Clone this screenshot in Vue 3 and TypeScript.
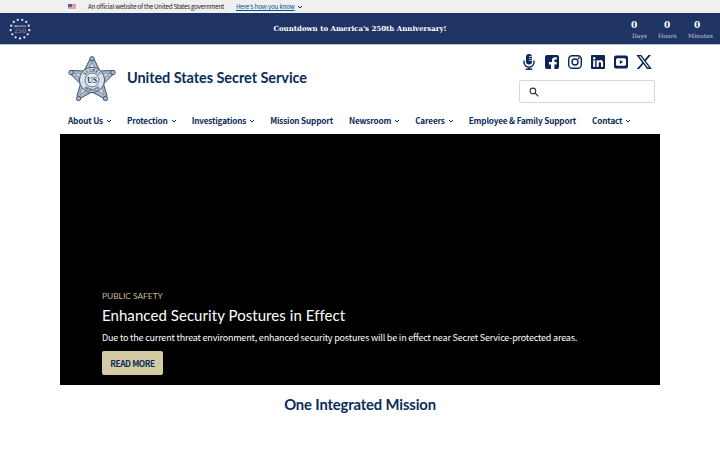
<template>
  <div class="page">
    <div class="gov-banner">
      <svg class="flag" viewBox="0 0 16 11">
        <rect width="16" height="11" fill="#f4e6e4" />
        <path d="M0 .8h16M0 3.2h16M0 5.6h16M0 8h16M0 10.3h16" stroke="#d5544d" stroke-width="1.2" />
        <rect width="8" height="6.2" fill="#3f57a0" />
        <path d="M1 1.5h6M1 3.2h6M1 4.8h6" stroke="#a3afd4" stroke-width=".6" stroke-dasharray=".8 .8" />
      </svg>
      <span class="gov-text">An official website of the United States government</span>
      <a class="gov-link">Here's how you know</a>
      <svg class="chevron" viewBox="0 0 8 6"><path d="M2 2 4 4l2-2" /></svg>
    </div>

    <div class="countdown">
      <svg class="seal" viewBox="0 0 22 22">
        <circle v-for="(dot, i) in sealDots" :key="i" :cx="dot.x" :cy="dot.y" r="1.15" fill="#e3e8f3" />
        <text x="11" y="8.6" class="seal-small" textLength="12">America</text>
        <text x="11" y="14.7" class="seal-big" textLength="12">250</text>
      </svg>
      <strong class="countdown-title">Countdown to America's 250th Anniversary!</strong>
      <div class="timer">
        <div v-for="unit in units" :key="unit" class="unit" :class="unit.toLowerCase()">
          <b>0</b>
          <span>{{ unit }}</span>
        </div>
      </div>
    </div>

    <header class="header">
      <div class="brand">
        <svg class="star" viewBox="0 0 48 46">
          <g fill="#a9b6c6" stroke="#3c5474" stroke-width="1">
            <path d="M22 3h4l6 12 12-.5 1 4L35.500 28 39 40l-3 2.500L24 36l-12 6.500L9 40l3.500-12L3 18.500l1-4 12 .5Z" />
            <circle cx="24" cy="2.800" r="2.200" />
            <circle cx="45" cy="16.500" r="2.200" />
            <circle cx="37.500" cy="42.500" r="2.200" />
            <circle cx="10.500" cy="42.500" r="2.200" />
            <circle cx="3" cy="16.500" r="2.200" />
          </g>
          <path d="m24 6 3 7h-6zM42 17l-6 5-1-4zM36 39l-6-5 4-2zM12 39l2-7 4 2zM6 17l7 1-1 4z" fill="#dde3ea" stroke="#647991" stroke-width=".6" />
          <circle cx="24" cy="24" r="12.600" fill="#dbe1e8" stroke="#405875" />
          <path id="badge-top" d="M15.800 24a8.200 8.200 0 0 1 16.400 0" fill="none" />
          <path id="badge-bottom" d="M12.600 24a11.400 11.400 0 0 0 22.800 0" fill="none" />
          <text class="badge-text"><textPath href="#badge-top" startOffset="50%">SECRET</textPath></text>
          <text class="badge-text"><textPath href="#badge-bottom" startOffset="50%">SERVICE</textPath></text>
          <circle cx="24" cy="24" r="7" fill="#e7ebf0" stroke="#405875" stroke-width=".8" />
          <text x="24" y="26.900" class="badge-us">US</text>
        </svg>
        <span class="brand-name">United States Secret Service</span>
      </div>
      <div class="tools">
        <div class="social">
          <svg viewBox="0 0 16 16">
            <rect x="5" y="0" width="6" height="10.500" rx="3" />
            <path d="M7.800 2.500H11M7.800 4.500H11M7.800 6.500H11" stroke="#fff" stroke-width=".7" />
            <path d="M3 6.500v1.700a5 5 0 0 0 10 0V6.500M8 13.200v2M4.700 15.300h6.600" class="line" />
          </svg>
          <svg viewBox="0 0 16 16">
            <path d="M3 1h10a2 2 0 0 1 2 2v10a2 2 0 0 1-2 2h-2.600v-4.600h2l.4-2.400h-2.400V6.700c0-.8.5-1.200 1.300-1.200h1.200V3.400c-.5-.1-1.100-.2-1.800-.2-2 0-3.100 1.200-3.100 3.100V8H5v2.400h2V15H3a2 2 0 0 1-2-2V3a2 2 0 0 1 2-2Z" />
          </svg>
          <svg viewBox="0 0 16 16">
            <rect x="1.700" y="1.700" width="12.600" height="12.600" rx="3.500" class="line" />
            <circle cx="8" cy="8" r="3" class="line" />
            <circle cx="11.800" cy="4.200" r=".95" />
          </svg>
          <svg viewBox="0 0 16 16">
            <path d="M2 1h12a1 1 0 0 1 1 1v12a1 1 0 0 1-1 1H2a1 1 0 0 1-1-1V2a1 1 0 0 1 1-1Z" />
            <path d="M3.200 6.300h2V13h-2zM6.600 6.300h2v.9c.4-.7 1.100-1.100 2-1.100 2 0 2.500 1.300 2.500 3.100V13h-2.100V9.600c0-.9-.1-1.700-1.100-1.700s-1.200.8-1.200 1.700V13H6.600z" fill="#fff" />
            <circle cx="4.200" cy="4.200" r="1.200" fill="#fff" />
          </svg>
          <svg viewBox="0 0 16 16">
            <rect x="1" y="1.500" width="14" height="13" rx="2" />
            <rect x="3" y="4.300" width="10" height="7.400" rx="1.500" fill="#fff" />
            <path d="m6.800 6 3.300 2-3.300 2z" />
          </svg>
          <svg viewBox="0 0 512 512">
            <path d="M403 32h76L313 221.600 508 480H355L235 323 98 480H22l178-203L13 32h157l108.300 143.600zM376.500 434.500h42L146 75.300h-45z" />
          </svg>
        </div>
        <div class="search">
          <svg viewBox="0 0 10 10"><circle cx="3.900" cy="3.900" r="2.800" /><path d="m6 6 3.300 3.300" /></svg>
        </div>
      </div>
    </header>

    <nav class="nav">
      <a v-for="item in navItems" :key="item.label">
        <span>{{ item.label }}</span>
        <svg v-if="item.menu" class="chevron" viewBox="0 0 8 6"><path d="M2 2 4 4l2-2" /></svg>
      </a>
    </nav>

    <section class="hero">
      <div class="eyebrow">PUBLIC SAFETY</div>
      <h1>Enhanced Security Postures in Effect</h1>
      <p>Due to the current threat environment, enhanced security postures will be in effect near Secret Service-protected areas.</p>
      <button type="button">READ MORE</button>
    </section>

    <h2 class="mission">One Integrated Mission</h2>
  </div>
</template>

<script setup lang="ts">
interface NavItem {
  label: string
  menu: boolean
}

const units: string[] = ['Days', 'Hours', 'Minutes']

const navItems: NavItem[] = [
  { label: 'About Us', menu: true },
  { label: 'Protection', menu: true },
  { label: 'Investigations', menu: true },
  { label: 'Mission Support', menu: false },
  { label: 'Newsroom', menu: true },
  { label: 'Careers', menu: true },
  { label: 'Employee & Family Support', menu: false },
  { label: 'Contact', menu: true }
]

const sealDots = Array.from({ length: 13 }, (_, i) => {
  const angle = (i / 13) * Math.PI * 2 + Math.PI / 2
  return { x: 11 + Math.cos(angle) * 9.4, y: 11 + Math.sin(angle) * 9.4 }
})
</script>

<style>
body {
  margin: 0;
  background: #fff;
  overflow: hidden;
}
</style>

<style scoped>
.page {
  width: 720px;
  height: 450px;
  overflow: hidden;
  color: #0b2c59;
  font-family: "Noto Sans CJK SC", "Noto Sans", sans-serif;
  white-space: nowrap;
}

svg {
  display: block;
  flex-shrink: 0;
}

.gov-banner {
  display: flex;
  align-items: center;
  box-sizing: border-box;
  height: 13px;
  padding-left: 68px;
  background: #f0f0f0;
  font-size: 6.2px;
  letter-spacing: -0.21px;
  line-height: 13px;
  color: #1b1b1b;
}

.flag {
  width: 8px;
  height: 5.5px;
  margin-right: 12px;
}

.gov-text {
  width: 148px;
}

.gov-link {
  margin-right: 1px;
  color: #005288;
  letter-spacing: -0.14px;
  text-decoration: underline;
}

.chevron {
  width: 8px;
  height: 6px;
  fill: none;
  stroke: #0b2c59;
  stroke-width: 1;
}

.countdown {
  display: grid;
  grid-template-columns: 100px 1fr 100px;
  height: 32px;
  background: #1f3364;
  border-bottom: 1px solid #b4bdcd;
  box-sizing: border-box;
  color: #fff;
  font-family: "DejaVu Serif", serif;
}

.seal {
  width: 22px;
  height: 22px;
  margin: 5px 0 0 9px;
}

.seal text {
  text-anchor: middle;
  font-family: "DejaVu Serif", serif;
}

.seal .seal-small {
  font-size: 2.8px;
  fill: #fff;
}

.seal .seal-big {
  font-size: 6px;
  fill: #b5a08b;
}

.countdown-title {
  text-align: center;
  font-size: 7px;
  line-height: 32px;
}

.timer {
  display: flex;
  padding-top: 6px;
}

.unit {
  display: flex;
  flex-direction: column;
  font-size: 6px;
  line-height: 9px;
  color: #c9cfdd;
}

.unit b {
  width: 12px;
  font-size: 9px;
  line-height: 12px;
  color: #fff;
}

.days {
  width: 27px;
  margin-left: 11px;
}

.hours {
  width: 30px;
}

.days span {
  padding-left: 1px;
}

.hours b,
.minutes b {
  padding-left: 6px;
}

.header {
  display: flex;
  justify-content: space-between;
  height: 64px;
  padding: 0 65px 0 68px;
}

.brand {
  display: flex;
  align-items: center;
}

.star {
  width: 48px;
  height: 46px;
  margin-top: 4px;
}

.badge-text {
  font: bold 4px "Liberation Sans", sans-serif;
  text-anchor: middle;
  fill: #294564;
}

.badge-us {
  font: bold 8px "Liberation Serif", serif;
  text-anchor: middle;
  fill: #294564;
}

.brand-name {
  margin-left: 11px;
  font-family: Lato, sans-serif;
  font-size: 14.5px;
  font-weight: 700;
  letter-spacing: -0.07px;
}

.tools {
  width: 136px;
  padding-top: 9px;
}

.social {
  display: flex;
  gap: 7.1px;
  padding-left: 2px;
}

.social svg {
  width: 16px;
  height: 16px;
  fill: #0b2556;
}

.social .line {
  fill: none;
  stroke: #0b2556;
  stroke-width: 1.4;
}

.search {
  box-sizing: border-box;
  height: 23px;
  margin-top: 10px;
  padding: 6px 9px;
  border: 1px solid #d5d7da;
  border-radius: 2px;
}

.search svg {
  width: 10px;
  height: 10px;
  fill: none;
  stroke: #333;
  stroke-width: 1.1;
}

.nav {
  display: flex;
  gap: 16px;
  height: 25px;
  padding-left: 68px;
  font-size: 8.2px;
  font-weight: 700;
  letter-spacing: -0.17px;
  line-height: 23px;
}

.nav a {
  display: flex;
  align-items: center;
  height: 23px;
}

.nav .chevron {
  margin: 1px -2px 0 2px;
}

.hero {
  box-sizing: border-box;
  width: 600px;
  height: 251px;
  margin: 0 auto;
  padding: 156px 42px 0;
  background: #000;
  color: #fff;
}

.eyebrow {
  font-family: Lato, sans-serif;
  font-size: 8.4px;
  line-height: 13px;
  color: #c8bd94;
}

.hero h1 {
  margin: 3px 0 0;
  font-family: Lato, sans-serif;
  font-size: 15px;
  font-weight: 400;
  letter-spacing: 0.06px;
  line-height: 19px;
}

.hero p {
  margin: 6px 0 0;
  font-size: 9px;
  letter-spacing: -0.19px;
  line-height: 14px;
}

.hero button {
  display: block;
  width: 61px;
  height: 24px;
  margin-top: 6px;
  padding: 0;
  border: 0;
  border-radius: 2px;
  background: #d4cba4;
  color: #0b2c59;
  font-family: inherit;
  font-size: 8.3px;
  font-weight: 700;
  letter-spacing: -0.38px;
  line-height: 24px;
}

.mission {
  margin: 8px 0 0;
  text-align: center;
  font-family: Lato, sans-serif;
  font-size: 14.8px;
  font-weight: 700;
  letter-spacing: -0.14px;
  line-height: 22px;
}
</style>
